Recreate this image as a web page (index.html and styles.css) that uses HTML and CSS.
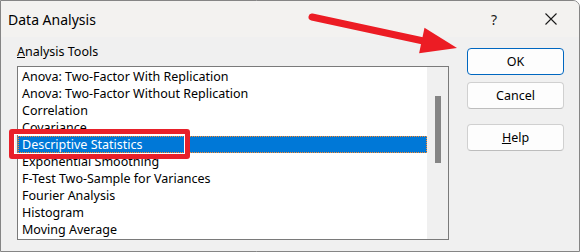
FILE: index.html
```html
<!DOCTYPE html>
<html>
<head>
<meta charset="utf-8">
<link rel="stylesheet" href="styles.css">
</head>
<body>
<div class="window">
  <div class="titlebar">
    <span class="title">Data Analysis</span>
    <span class="help-q">?</span>
    <span class="close">
      <svg width="12" height="12" viewBox="0 0 12 12"><path d="M0.5 0.5 L11.5 11.5 M11.5 0.5 L0.5 11.5" stroke="#1a1a1a" stroke-width="1.1" fill="none"/></svg>
    </span>
  </div>
  <div class="content">
    <div class="left">
      <div class="label"><u>A</u>nalysis Tools</div>
      <div class="listbox">
        <div class="rows">
          <div class="row">Anova: Two-Factor With Replication</div>
          <div class="row">Anova: Two-Factor Without Replication</div>
          <div class="row">Correlation</div>
          <div class="row">Covariance</div>
          <div class="row selected">Descriptive Statistics</div>
          <div class="row">Exponential Smoothing</div>
          <div class="row">F-Test Two-Sample for Variances</div>
          <div class="row">Fourier Analysis</div>
          <div class="row">Histogram</div>
          <div class="row">Moving Average</div>
        </div>
        <div class="scrollbar"><div class="thumb"></div></div>
      </div>
    </div>
    <div class="buttons">
      <div class="btn default">OK</div>
      <div class="btn">Cancel</div>
      <div class="btn help"><u>H</u>elp</div>
    </div>
  </div>
  <div class="highlight"></div>
  <svg class="arrow" width="580" height="252" viewBox="0 0 580 252">
    <line x1="312" y1="17" x2="428" y2="42" stroke="#ec1c24" stroke-width="7" stroke-linecap="round"/>
    <polygon points="424.5,27.8 419.1,53.2 457,48" fill="#ec1c24"/>
  </svg>
</div>
</body>
</html>
```
FILE: styles.css
```css
html, body {
  margin: 0;
  padding: 0;
  background: #ffffff;
}

.window {
  position: relative;
  width: 580px;
  height: 252px;
  box-sizing: border-box;
  border: 1px solid #858585;
  border-top-right-radius: 7px;
  background: #f0f0f0;
  overflow: hidden;
  font-family: "Segoe UI", "Noto Sans", sans-serif;
  color: #000;
}

.titlebar {
  height: 36px;
  background: #f3f2f0;
  display: flex;
  align-items: center;
  padding-left: 7px;
}

.title {
  font-size: 14px;
  flex: 1;
}

.help-q {
  font-size: 14px;
  width: 12px;
  text-align: center;
  margin-right: 45px;
  color: #1a1a1a;
}

.close {
  display: flex;
  width: 12px;
  height: 12px;
  margin-right: 22px;
}

.content {
  display: flex;
  padding-left: 16px;
  gap: 18px;
}

.left {
  display: flex;
  flex-direction: column;
  width: 432px;
}

.label {
  font-size: 12.5px;
  line-height: 16px;
  margin-top: 7px;
  margin-bottom: 6px;
}

.listbox {
  height: 174px;
  box-sizing: border-box;
  border: 1px solid #7a7a7a;
  background: #fff;
  display: flex;
}

.rows {
  flex: 1;
  padding-top: 1px;
  overflow: hidden;
}

.row {
  font-size: 12.5px;
  line-height: 17px;
  height: 17px;
  padding-left: 4px;
  padding-top: 1px;
  box-sizing: border-box;
  line-height: 16px;
  white-space: nowrap;
}

.row.selected {
  background: #0078d7;
  color: #fff;
  border: 1px dotted #ff8a2a;
  padding-left: 3px;
  padding-top: 0;
  line-height: 15px;
}

.scrollbar {
  width: 21px;
  background: #f0f0f0;
  display: flex;
  justify-content: center;
}

.thumb {
  width: 6px;
  height: 67px;
  margin-top: 29px;
  background: #858585;
}

.buttons {
  display: flex;
  flex-direction: column;
  width: 97px;
  padding-top: 11px;
}

.btn {
  height: 27px;
  box-sizing: border-box;
  border: 1px solid #d0d0d0;
  border-bottom-color: #bdbdbd;
  border-radius: 4px;
  background: #fdfdfd;
  font-size: 12.5px;
  display: flex;
  align-items: center;
  justify-content: center;
  margin-bottom: 7px;
}

.btn.default {
  border: 1px solid #0067c0;
}

.btn.help {
  margin-top: 8px;
}

.highlight {
  position: absolute;
  left: 8px;
  top: 128px;
  width: 181px;
  height: 30px;
  box-sizing: border-box;
  border: 5px solid #e8202a;
  border-radius: 3px;
  box-shadow: inset 0 0 0 1px #ffffff;
}

.arrow {
  position: absolute;
  left: -1px;
  top: -1px;
}
```
